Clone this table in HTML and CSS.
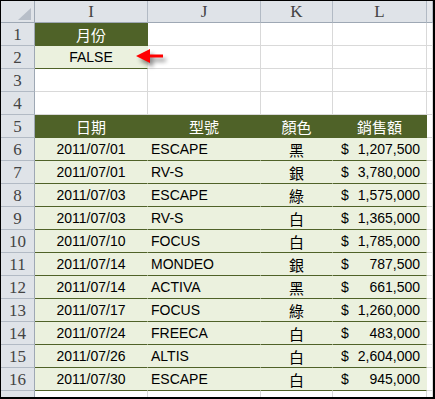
FILE: index.html
```html
<!DOCTYPE html>
<html lang="zh-Hant">
<head>
<meta charset="utf-8">
<title>月份 FALSE</title>
<link rel="stylesheet" href="styles.css">
</head>
<body>
<div class="sheet">
  <div class="row hdr">
    <div class="c rh corner"></div>
    <div class="c ch">I</div>
    <div class="c ch">J</div>
    <div class="c ch">K</div>
    <div class="c ch">L</div>
    <div class="c ch sl"></div>
  </div>
  <div class="row">
    <div class="c rh">1</div>
    <div class="c th">月份</div>
    <div class="c"></div><div class="c"></div><div class="c"></div><div class="c sl"></div>
  </div>
  <div class="row">
    <div class="c rh">2</div>
    <div class="c fd ctr">FALSE</div>
    <div class="c"></div><div class="c"></div><div class="c"></div><div class="c sl"></div>
  </div>
  <div class="row">
    <div class="c rh">3</div>
    <div class="c"></div><div class="c"></div><div class="c"></div><div class="c"></div><div class="c sl"></div>
  </div>
  <div class="row">
    <div class="c rh">4</div>
    <div class="c"></div><div class="c"></div><div class="c"></div><div class="c"></div><div class="c sl"></div>
  </div>
  <div class="row">
    <div class="c rh">5</div>
    <div class="c th">日期</div>
    <div class="c th">型號</div>
    <div class="c th">顏色</div>
    <div class="c th">銷售額</div>
    <div class="c sl"></div>
  </div>
  <div class="row">
    <div class="c rh">6</div><div class="c fd ctr">2011/07/01</div><div class="c fd lft">ESCAPE</div><div class="c fd ctr cjk">黑</div><div class="c fd acc"><span>$</span><span>1,207,500</span></div><div class="c sl"></div>
  </div>
  <div class="row">
    <div class="c rh">7</div><div class="c fd ctr">2011/07/01</div><div class="c fd lft">RV-S</div><div class="c fd ctr cjk">銀</div><div class="c fd acc"><span>$</span><span>3,780,000</span></div><div class="c sl"></div>
  </div>
  <div class="row">
    <div class="c rh">8</div><div class="c fd ctr">2011/07/03</div><div class="c fd lft">ESCAPE</div><div class="c fd ctr cjk">綠</div><div class="c fd acc"><span>$</span><span>1,575,000</span></div><div class="c sl"></div>
  </div>
  <div class="row">
    <div class="c rh">9</div><div class="c fd ctr">2011/07/03</div><div class="c fd lft">RV-S</div><div class="c fd ctr cjk">白</div><div class="c fd acc"><span>$</span><span>1,365,000</span></div><div class="c sl"></div>
  </div>
  <div class="row">
    <div class="c rh">10</div><div class="c fd ctr">2011/07/10</div><div class="c fd lft">FOCUS</div><div class="c fd ctr cjk">白</div><div class="c fd acc"><span>$</span><span>1,785,000</span></div><div class="c sl"></div>
  </div>
  <div class="row">
    <div class="c rh">11</div><div class="c fd ctr">2011/07/14</div><div class="c fd lft">MONDEO</div><div class="c fd ctr cjk">銀</div><div class="c fd acc"><span>$</span><span>787,500</span></div><div class="c sl"></div>
  </div>
  <div class="row">
    <div class="c rh">12</div><div class="c fd ctr">2011/07/14</div><div class="c fd lft">ACTIVA</div><div class="c fd ctr cjk">黑</div><div class="c fd acc"><span>$</span><span>661,500</span></div><div class="c sl"></div>
  </div>
  <div class="row">
    <div class="c rh">13</div><div class="c fd ctr">2011/07/17</div><div class="c fd lft">FOCUS</div><div class="c fd ctr cjk">綠</div><div class="c fd acc"><span>$</span><span>1,260,000</span></div><div class="c sl"></div>
  </div>
  <div class="row">
    <div class="c rh">14</div><div class="c fd ctr">2011/07/24</div><div class="c fd lft">FREECA</div><div class="c fd ctr cjk">白</div><div class="c fd acc"><span>$</span><span>483,000</span></div><div class="c sl"></div>
  </div>
  <div class="row">
    <div class="c rh">15</div><div class="c fd ctr">2011/07/26</div><div class="c fd lft">ALTIS</div><div class="c fd ctr cjk">白</div><div class="c fd acc"><span>$</span><span>2,604,000</span></div><div class="c sl"></div>
  </div>
  <div class="row">
    <div class="c rh">16</div><div class="c fd ctr">2011/07/30</div><div class="c fd lft">ESCAPE</div><div class="c fd ctr cjk">白</div><div class="c fd acc"><span>$</span><span>945,000</span></div><div class="c sl"></div>
  </div>
  <div class="row">
    <div class="c rh"></div>
    <div class="c"></div><div class="c"></div><div class="c"></div><div class="c"></div><div class="c sl"></div>
  </div>
  <svg class="arrow" width="40" height="26" viewBox="0 0 40 26" aria-hidden="true">
    <defs>
      <filter id="sh" x="-30%" y="-30%" width="160%" height="180%">
        <feGaussianBlur stdDeviation="2"/>
      </filter>
    </defs>
    <g transform="translate(3,4)" filter="url(#sh)" fill="#000" opacity="0.45">
      <polygon points="2,9 16,2 16,7.5 29,7.5 29,10.5 16,10.5 16,16"/>
    </g>
    <polygon fill="#f00" points="2,9 16,2 16,7.5 29,7.5 29,10.5 16,10.5 16,16"/>
  </svg>
</div>
</body>
</html>
```

FILE: styles.css
```css
html, body {
  margin: 0;
  padding: 0;
  background: #fff;
}

.sheet {
  position: relative;
  box-sizing: border-box;
  width: 435px;
  height: 399px;
  border-style: solid;
  border-color: #000;
  border-width: 1px 2px 2px 1px;
  overflow: hidden;
  font-family: "Liberation Sans", "Noto Sans CJK TC", sans-serif;
  font-size: 14px;
  color: #000;
}

.row {
  display: grid;
  grid-template-columns: 34px 113px 113px 72px 94px 6px;
  height: 23px;
}

.row.hdr {
  height: 22px;
}

.c {
  box-sizing: border-box;
  border-right: 1px solid #d9d9d9;
  border-bottom: 1px solid #d9d9d9;
  display: flex;
  align-items: center;
  white-space: nowrap;
  overflow: hidden;
}

.rh, .ch {
  background: #dfe3e8;
  border-right-color: #b2bac4;
  border-bottom-color: #b2bac4;
  justify-content: center;
  font-family: "Liberation Serif", "DejaVu Serif", serif;
  font-size: 17px;
  color: #444;
  padding-top: 1px;
}

.rh {
  border-right-color: #9ea8b4;
}

.ch {
  border-bottom-color: #9ea8b4;
}

.ch.sl {
  background: #e4e7eb;
}

.corner {
  position: relative;
  border-bottom-color: #9ea8b4;
}

.corner::after {
  content: "";
  position: absolute;
  left: 17px;
  top: 7px;
  width: 13px;
  height: 12px;
  background: #b7bec8;
  clip-path: polygon(100% 0, 100% 100%, 0 100%);
}

.th {
  background: #4f6228;
  border-right-color: #4f6228;
  border-bottom-color: #4f6228;
  color: #fff;
  justify-content: center;
  font-family: "Noto Sans CJK TC", sans-serif;
  font-size: 15px;
}

.fd {
  background: #ebf1de;
  border-right-color: #ebf1de;
  border-bottom-color: #4f6228;
}

.ctr {
  justify-content: center;
}

.lft {
  justify-content: flex-start;
  padding-left: 3px;
}

.cjk {
  font-family: "Noto Sans CJK TC", sans-serif;
  font-size: 15px;
}

.acc {
  justify-content: space-between;
  padding-left: 8px;
  padding-right: 6px;
}

.arrow {
  position: absolute;
  left: 133px;
  top: 46px;
  overflow: visible;
}
```
